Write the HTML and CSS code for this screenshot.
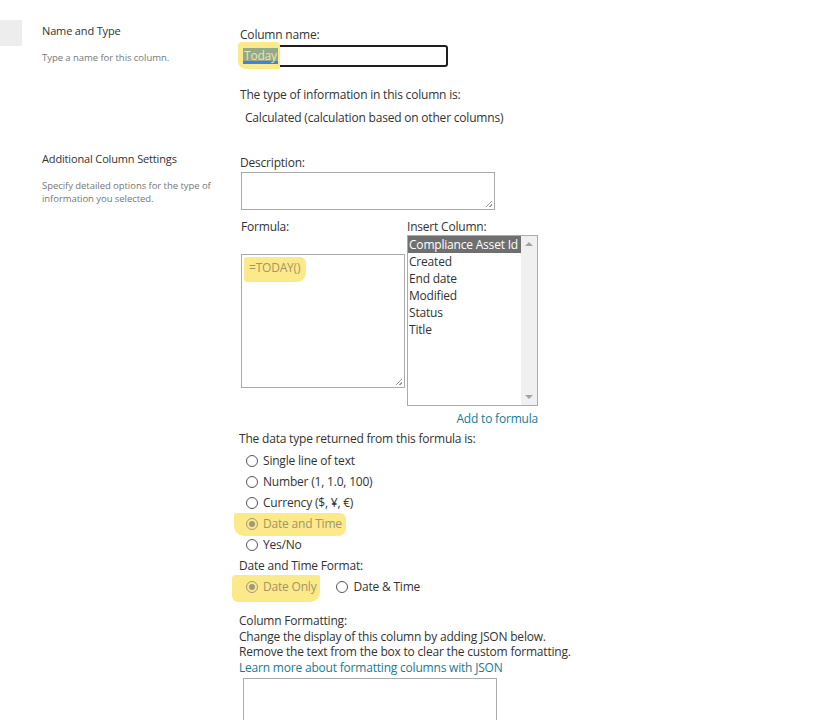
FILE: index.html
```html
<!DOCTYPE html>
<html>
<head>
<meta charset="utf-8">
<link rel="stylesheet" href="styles.css">
</head>
<body>
<div class="page">
  <div class="strip"><div class="strip-box"></div></div>
  <div class="content">
    <section class="sec sec-name">
      <div class="desc">
        <div class="desc-title">Name and Type</div>
        <div class="desc-text">Type a name for this column.</div>
      </div>
      <div class="fields">
        <div class="label l-colname">Column name:</div>
        <div class="name-input"><span class="hl hl-today"><span class="sel">Today</span></span></div>
        <div class="label l-type">The type of information in this column is:</div>
        <div class="label l-calc">Calculated (calculation based on other columns)</div>
      </div>
    </section>
    <section class="sec sec-add">
      <div class="desc">
        <div class="desc-title">Additional Column Settings</div>
        <div class="desc-text">Specify detailed options for the type of information you selected.</div>
      </div>
      <div class="fields">
        <div class="label l-desc">Description:</div>
        <div class="textarea ta-desc"><span class="grip"></span></div>
        <div class="formula-row">
          <div class="formula-col">
            <div class="label l-formula">Formula:</div>
            <div class="textarea ta-formula"><span class="hl hl-formula">=TODAY()</span><span class="grip"></span></div>
          </div>
          <div class="insert-col">
            <div class="label l-insert">Insert Column:</div>
            <div class="listbox">
              <ul class="items">
                <li class="selected">Compliance Asset Id</li>
                <li>Created</li>
                <li>End date</li>
                <li>Modified</li>
                <li>Status</li>
                <li>Title</li>
              </ul>
              <div class="scroll">
                <span class="arrow up"></span>
                <span class="arrow down"></span>
              </div>
            </div>
            <a class="link add-link">Add to formula</a>
          </div>
        </div>
        <div class="label l-return">The data type returned from this formula is:</div>
        <div class="radios">
          <div class="radio"><span class="dot"></span><span>Single line of text</span></div>
          <div class="radio"><span class="dot"></span><span>Number (1, 1.0, 100)</span></div>
          <div class="radio"><span class="dot"></span><span>Currency ($, ¥, €)</span></div>
          <div class="radio"><span class="hl hl-radio hl-dt"><span class="dot on"></span><span>Date and Time</span></span></div>
          <div class="radio"><span class="dot"></span><span>Yes/No</span></div>
        </div>
        <div class="label l-dtf">Date and Time Format:</div>
        <div class="radio-row">
          <div class="radio"><span class="hl hl-radio hl-do"><span class="dot on"></span><span>Date Only</span></span></div>
          <div class="radio r-dt"><span class="dot"></span><span>Date &amp; Time</span></div>
        </div>
        <div class="fmt">
          <div>Column Formatting:</div>
          <div>Change the display of this column by adding JSON below.</div>
          <div>Remove the text from the box to clear the custom formatting.</div>
          <a class="link">Learn more about formatting columns with JSON</a>
        </div>
        <div class="textarea ta-json"></div>
      </div>
    </section>
  </div>
</div>
</body>
</html>
```

FILE: styles.css
```css
html, body {
  margin: 0;
  padding: 0;
  background: #fff;
}
body {
  font-family: "Open Sans", "Noto Sans", sans-serif;
  color: #333;
  font-size: 12px;
  letter-spacing: -0.2px;
  overflow: hidden;
  height: 720px;
}
.page {
  display: flex;
  gap: 20px;
}
.strip {
  width: 22px;
  flex: none;
}
.strip-box {
  margin-top: 20px;
  height: 26px;
  background: #ededed;
}
.content {
  flex: 1;
}
.sec {
  display: flex;
}
.desc {
  width: 198px;
  flex: none;
}
.desc-title {
  font-size: 11px;
  line-height: 16px;
  color: #333;
  letter-spacing: -0.15px;
}
.desc-text {
  font-size: 9.5px;
  line-height: 13px;
  color: #777;
  margin-top: 12px;
  width: 180px;
  letter-spacing: -0.05px;
}
.sec-name .desc { padding-top: 23px; }
.fields {
  flex: none;
}
.label {
  line-height: 18px;
  color: #333;
  white-space: nowrap;
}
.l-colname { margin-top: 26px; }
.name-input {
  margin-top: 1px;
  margin-left: 1px;
  width: 203px;
  height: 18px;
  border: 2px solid #1f1f1f;
  border-radius: 3px;
  position: relative;
}
.hl {
  background: #fce98a;
}
.hl-today {
  position: absolute;
  left: -5px;
  top: -5px;
  height: 27px;
  padding-left: 5px;
  padding-right: 2px;
  border-radius: 4px 4px 2px 8px;
  display: flex;
  align-items: center;
}
.sel {
  background: #93a98c;
  color: #eee6a6;
  line-height: 16px;
  padding: 0 1px;
  box-shadow: inset 0 -3px 0 #3c82e6;
}
.l-type { margin-top: 19px; }
.l-calc { margin-top: 5px; margin-left: 5px; }

.sec-add .desc { padding-top: 24px; }
.l-desc { margin-top: 27px; }
.textarea {
  border: 1px solid #ababab;
  position: relative;
  box-sizing: border-box;
}
.ta-desc {
  margin-left: 1px;
  width: 254px;
  height: 38px;
}
.grip {
  position: absolute;
  right: 2px;
  bottom: 2px;
  width: 6px;
  height: 6px;
  background: linear-gradient(135deg, transparent 45%, #999 45%, #999 55%, transparent 55%, transparent 75%, #999 75%, #999 85%, transparent 85%);
}
.formula-row {
  display: flex;
  gap: 2px;
  margin-left: 1px;
  margin-top: 8px;
}
.formula-col {
  width: 164px;
}
.ta-formula {
  margin-top: 18px;
  width: 164px;
  height: 134px;
  padding: 2px 0 0 2px;
}
.hl-formula {
  display: inline-block;
  padding: 2px 6px 6px 5px;
  color: #a39565;
  border-radius: 3px 6px 9px 3px;
}
.insert-col {
  width: 131px;
  display: flex;
  flex-direction: column;
}
.listbox {
  height: 171px;
  border: 1px solid #ababab;
  box-sizing: border-box;
  display: flex;
  margin-top: -1px;
}
.items {
  list-style: none;
  margin: 0;
  padding: 0;
  flex: 1;
  min-width: 0;
}
.items li {
  line-height: 17px;
  padding-left: 1px;
  color: #333;
  white-space: nowrap;
  overflow: hidden;
}
.items li.selected {
  background: #6f6f6f;
  color: #fff;
}
.scroll {
  width: 16px;
  flex: none;
  background: #f0f0f0;
  position: relative;
}
.arrow {
  position: absolute;
  left: 4px;
  width: 0;
  height: 0;
  border-left: 4px solid transparent;
  border-right: 4px solid transparent;
}
.arrow.up {
  top: 6px;
  border-bottom: 4px solid #a3a3a3;
}
.arrow.down {
  bottom: 6px;
  border-top: 4px solid #a3a3a3;
}
.link {
  color: #177b95;
  text-decoration: none;
}
.add-link {
  align-self: flex-end;
  margin-right: 0;
  line-height: 18px;
  margin-top: 4px;
}
.l-return { margin-top: 2px; margin-left: -1px; }
.radios {
  display: flex;
  flex-direction: column;
  gap: 3px;
  margin-top: 4px;
}
.radio {
  display: flex;
  align-items: center;
  gap: 5px;
  line-height: 18px;
  height: 18px;
  padding-left: 6px;
  position: relative;
}
.dot {
  width: 12px;
  height: 12px;
  border: 1px solid #555;
  border-radius: 50%;
  flex: none;
  box-sizing: border-box;
  position: relative;
}
.dot.on {
  border-color: #a09a7d;
}
.dot.on::after {
  content: "";
  position: absolute;
  left: 2px;
  top: 2px;
  width: 6px;
  height: 6px;
  border-radius: 50%;
  background: #a09a7d;
}
.hl-radio {
  display: flex;
  align-items: center;
  gap: 5px;
  color: #a39565;
  margin-left: -12px;
  padding: 2px 4px 3px 12px;
  margin-top: -2px;
  margin-bottom: -3px;
}
.hl-dt { border-radius: 2px 6px 8px 10px; }
.hl-do {
  padding-left: 14px;
  margin-left: -14px;
  border-radius: 4px 2px 10px 6px;
  padding-top: 3px;
  padding-bottom: 6px;
  margin-top: -3px;
  margin-bottom: -6px;
}
.l-dtf { margin-top: 3px; margin-left: -1px; }
.radio-row {
  display: flex;
  gap: 10px;
  margin-top: 3px;
}
.fmt {
  margin-top: 17px;
  margin-left: -1px;
  line-height: 15.7px;
  white-space: nowrap;
}
.fmt .link { display: block; }
.ta-json {
  margin-top: 2px;
  margin-left: 3px;
  width: 254px;
  height: 60px;
}
```
